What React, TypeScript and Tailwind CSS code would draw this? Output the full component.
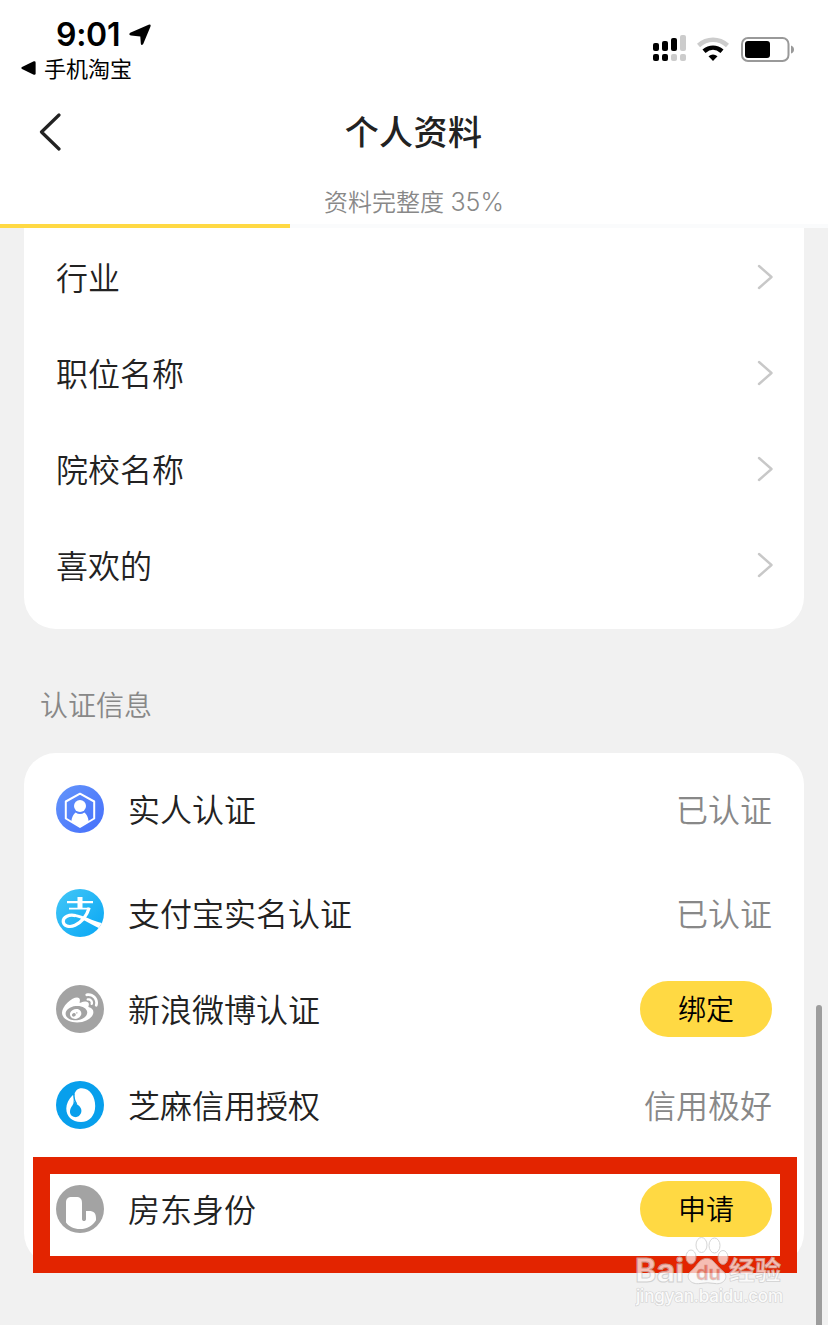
import type { ReactNode } from "react";
import { FaWeibo } from "react-icons/fa";

type AuthItem = {
  label: string;
  icon: ReactNode;
  status?: string;
  action?: string;
  tall?: boolean;
};

const profileRows = ["行业", "职位名称", "院校名称", "喜欢的"];

const authItems: AuthItem[] = [
  { label: "实人认证", icon: <PersonIcon />, status: "已认证", tall: true },
  { label: "支付宝实名认证", icon: <AlipayIcon />, status: "已认证" },
  { label: "新浪微博认证", icon: <WeiboIcon />, action: "绑定" },
  { label: "芝麻信用授权", icon: <SesameIcon />, status: "信用极好" },
  { label: "房东身份", icon: <LandlordIcon />, action: "申请", tall: true },
];

function PersonIcon() {
  return (
    <svg className="size-12" viewBox="0 0 48 48">
      <defs>
        <linearGradient id="person-bg" x1="0" y1="0" x2="1" y2="1">
          <stop offset="0" stopColor="#6495fb" />
          <stop offset="1" stopColor="#456ffb" />
        </linearGradient>
      </defs>
      <circle cx="24" cy="24" r="24" fill="url(#person-bg)" />
      <path d="M24 8.7 38.2 16.5V33.5L24 42 9.8 33.5V16.5Z" fill="none" stroke="#fff" strokeWidth="2" strokeLinejoin="round" />
      <circle cx="24" cy="21" r="6" fill="#fff" />
      <path d="M15.3 36.4C15.8 32 17.4 28.8 19.6 27.4Q24 30.4 28.4 27.4C30.6 28.8 32.2 32 32.7 36.4L24 41.6Z" fill="#fff" />
    </svg>
  );
}

function AlipayIcon() {
  return (
    <svg className="size-12" viewBox="0 0 48 48">
      <defs>
        <linearGradient id="alipay-bg" x1="0" y1="0" x2="1" y2="1">
          <stop offset="0" stopColor="#43c7f7" />
          <stop offset="1" stopColor="#08a6f4" />
        </linearGradient>
        <clipPath id="alipay-clip">
          <circle cx="24" cy="24" r="24" />
        </clipPath>
      </defs>
      <circle cx="24" cy="24" r="24" fill="url(#alipay-bg)" />
      <g clipPath="url(#alipay-clip)" fill="none" stroke="#fff">
        <path d="M11 13.2H37" strokeWidth="2.2" />
        <path d="M24 8V20" strokeWidth="5" />
        <path d="M13 19.6H34" strokeWidth="1.8" />
        <path d="M33.2 18.8C31 26 26 33 19 36.3C13 39 7.2 36.7 7.2 32.3C7.2 27.6 13 25.3 19.5 26.6" strokeWidth="3.2" />
        <path d="M18.8 25C28 26.3 36 32 46.8 34.2L43.6 39.4C34.5 35.8 26 28.6 17.5 27.6Z" fill="#fff" stroke="none" />
      </g>
    </svg>
  );
}

function WeiboIcon() {
  return (
    <span className="flex size-12 items-center justify-center rounded-full bg-[#a3a3a3]">
      <FaWeibo className="size-9 text-white" />
    </span>
  );
}

function SesameIcon() {
  return (
    <svg className="size-12" viewBox="0 0 48 48">
      <circle cx="24" cy="24" r="24" fill="#089fec" />
      <path d="M18 14.5C19 9.5 22 7 26 7.2C34 7.5 39.2 15.5 39.2 25C39.2 34.8 33.2 41 25 41C16 41 10.3 35.5 10.3 27.5C10.3 22.5 12.8 18 16.6 14.2Z" fill="#fff" />
      <path d="M17.4 13.8C16.9 18.7 18 21.4 21.3 23.5C25.2 26 26.3 29.6 24.8 32.6C23.5 35.4 21.2 36.4 18.9 36.1C15.5 35.7 13.6 33 14 29.8C14.3 27 16.2 25.1 17.3 22.8C18.2 20.5 16.8 17.5 17.4 13.8Z" fill="#089fec" />
      <path d="M18 12.5C17.6 17.5 18.8 20.6 20.6 23" fill="none" stroke="#089fec" strokeWidth="1.4" />
    </svg>
  );
}

function LandlordIcon() {
  return (
    <svg className="size-12" viewBox="0 0 48 48">
      <circle cx="24" cy="24" r="24" fill="#a3a3a3" />
      <path d="M10 18C10 13.8 11.8 12 16 12H20C24.2 12 26 13.8 26 18V34C26 36.8 30 36.8 30 34V26H33C38 26 40 28.5 40 33V35.2C36.5 41 31 44 24 44C17.5 44 13 41.5 10 37.5Z" fill="#fff" />
    </svg>
  );
}

function StatusBar() {
  return (
    <div className="flex h-[88px] justify-between pl-[21px] pr-[33px]">
      <div className="pt-[18px]">
        <div className="flex h-[34px] items-center pl-[35px]">
          <span className="w-[66px] whitespace-nowrap font-['Inter'] text-[32px] font-semibold leading-[34px] tracking-[-0.3px]">9:01</span>
          <svg className="ml-[7px] size-[22px]" viewBox="0 0 22 22">
            <path d="M1.2 8.8 19.6.8Q22.4 0 21.4 2.8L14.2 20Q12.4 22.4 11.8 19.5L11.3 12.4 2 11.5Q-.9 10.6 1.2 8.8Z" />
          </svg>
        </div>
        <div className="flex h-8 items-center">
          <svg className="h-[14px] w-[15px]" viewBox="0 0 15 14">
            <path d="M1 6 12.8.3Q14.6-.3 14.6 1.6V12.4Q14.6 14.3 12.8 13.7L1 8Q-.3 7 1 6Z" />
          </svg>
          <span className="-mt-0.5 ml-2 text-[22px] font-normal leading-8">手机淘宝</span>
        </div>
      </div>
      <div className="flex gap-3 pt-[34px]">
        <svg className="h-[30px] w-[34px]" viewBox="0 0 34 30">
          <rect x="0" y="9" width="6" height="8" rx="2" />
          <rect x="9" y="7" width="6" height="10" rx="2" />
          <rect x="18" y="4" width="6" height="13" rx="2" />
          <rect x="27" y="1" width="6" height="16" rx="2" fill="#ccc" />
          <rect x="0" y="20" width="6" height="7" rx="2" />
          <rect x="9" y="20" width="6" height="7" rx="2" />
          <rect x="18" y="20" width="6" height="7" rx="2" fill="#ccc" />
          <rect x="27" y="20" width="6" height="7" rx="2" fill="#ccc" />
        </svg>
        <svg className="-ml-0.5 h-[30px] w-8" viewBox="0 0 32 30">
          <path d="M1.5 11.5C10 3.8 22 3.8 30.5 11.5" fill="none" stroke="#ccc" strokeWidth="4.6" />
          <path d="M7 17.3C12.5 12.5 19.5 12.5 25 17.3" fill="none" stroke="#000" strokeWidth="4.6" />
          <path d="M11.5 22.3Q16 18.7 20.5 22.3L16 27Z" />
        </svg>
        <svg className="h-[30px] w-[54px]" viewBox="0 0 54 30">
          <rect x="1" y="4" width="46.5" height="23" rx="6" fill="none" stroke="#999" strokeWidth="2" />
          <rect x="4" y="7" width="25" height="17" rx="3" />
          <path d="M50 11.5Q53 12.5 53 15.5Q53 18.5 50 19.5Z" fill="#999" />
        </svg>
      </div>
    </div>
  );
}

function Header() {
  return (
    <header className="h-[228px] bg-white text-black">
      <StatusBar />
      <div className="flex h-[88px] items-center px-[39px]">
        <svg className="w-[23px] shrink-0" viewBox="0 0 23 38" fill="none" stroke="#222" strokeWidth="3.2" strokeLinecap="round" strokeLinejoin="round">
          <path d="M20 2 2.5 19 20 36" />
        </svg>
        <h1 className="-mt-0.5 flex-1 pr-6 text-center text-[34px] font-medium leading-[48px] text-[#222] tracking-[0.4px]">个人资料</h1>
      </div>
      <p className="h-12 pt-[5px] text-center text-2xl font-[350] leading-[40px] text-[#888]">
        资料完整度 <span className="ml-px font-['Inter'] text-[25px] font-light">35%</span>
      </p>
      <div className="h-1 bg-[#fafbfc]">
        <div className="h-1 w-[290px] bg-[#ffd943]" />
      </div>
    </header>
  );
}

function Watermark() {
  return (
    <div className="absolute left-[635px] top-[1236px] w-[150px] opacity-70">
      <svg className="h-[74px] w-[150px]" viewBox="0 0 150 74" fill="#fff" stroke="#c4c4c4" strokeWidth="1">
        <text x="0" y="46" fontFamily="Inter" fontSize="33" fontWeight="700" textLength="49" lengthAdjust="spacingAndGlyphs">Bai</text>
        <ellipse cx="56" cy="21" rx="5" ry="7" />
        <ellipse cx="66.5" cy="9" rx="5.5" ry="7.5" />
        <ellipse cx="79.5" cy="9.5" rx="5.5" ry="7.5" />
        <ellipse cx="88" cy="21.5" rx="5" ry="7" />
        <path d="M55 36C60 32 61 29 65 25C69 21.5 75 21.5 78 25C82 29 84 32 89 36C94 42 88 49 80 47.5Q72 46 65 47.5C56 49 50 42 55 36Z" />
        <text x="61" y="44" fontFamily="Inter" fontSize="20" fontWeight="600" fill="#ef9588" strokeWidth="0.5">du</text>
        <text x="94" y="44" fontFamily="Noto Sans CJK SC" fontSize="26" fontWeight="700" strokeWidth="0.7">经验</text>
        <text x="1" y="66" fontFamily="Inter" fontSize="17" fontWeight="500" textLength="147" strokeWidth="1.2" paintOrder="stroke">jingyan.baidu.com</text>
      </svg>
    </div>
  );
}

export default function App() {
  return (
    <main className="relative h-[1325px] w-[828px] overflow-hidden bg-[#f1f1f1] font-['Noto_Sans_CJK_SC',sans-serif] font-[350] text-[#222]">
      <Header />

      <section className="mx-6 h-[401px] rounded-b-[32px] bg-white px-8 pt-px">
        {profileRows.map((label) => (
          <div key={label} className="flex h-24 items-center justify-between">
            <span className="-mt-0.5 text-[32px] leading-[48px]">{label}</span>
            <svg className="-mr-px h-[26px] w-4" viewBox="0 0 16 26" fill="none" stroke="#c8c8c8" strokeWidth="2.4" strokeLinecap="round" strokeLinejoin="round">
              <path d="M2 2 14.5 13 2 24" />
            </svg>
          </div>
        ))}
      </section>

      <h2 className="h-[124px] px-10 pt-[51px] text-[28px] leading-[48px] text-[#888]">认证信息</h2>

      <section className="mx-6 rounded-[32px] bg-white px-8">
        {authItems.map((item) => (
          <div key={item.label} className={item.tall ? "flex h-28 items-center" : "flex h-24 items-center"}>
            {item.icon}
            <span className="-mt-0.5 ml-6 flex-1 text-[32px] leading-[48px]">{item.label}</span>
            {item.status && <span className="-mt-0.5 text-[32px] leading-[48px] text-[#888]">{item.status}</span>}
            {item.action && (
              <button className="h-14 w-[132px] rounded-full bg-[#ffd943] pb-0.5 text-[28px] leading-[54px] text-black">{item.action}</button>
            )}
          </div>
        ))}
      </section>

      <div className="absolute left-[33px] top-[1157px] h-[116px] w-[764px] border-[17px] border-[#e32400]" />
      <div className="absolute left-[816px] top-[1005px] h-[340px] w-1.5 rounded-full bg-[#9d9d9d]" />
      <Watermark />
    </main>
  );
}
